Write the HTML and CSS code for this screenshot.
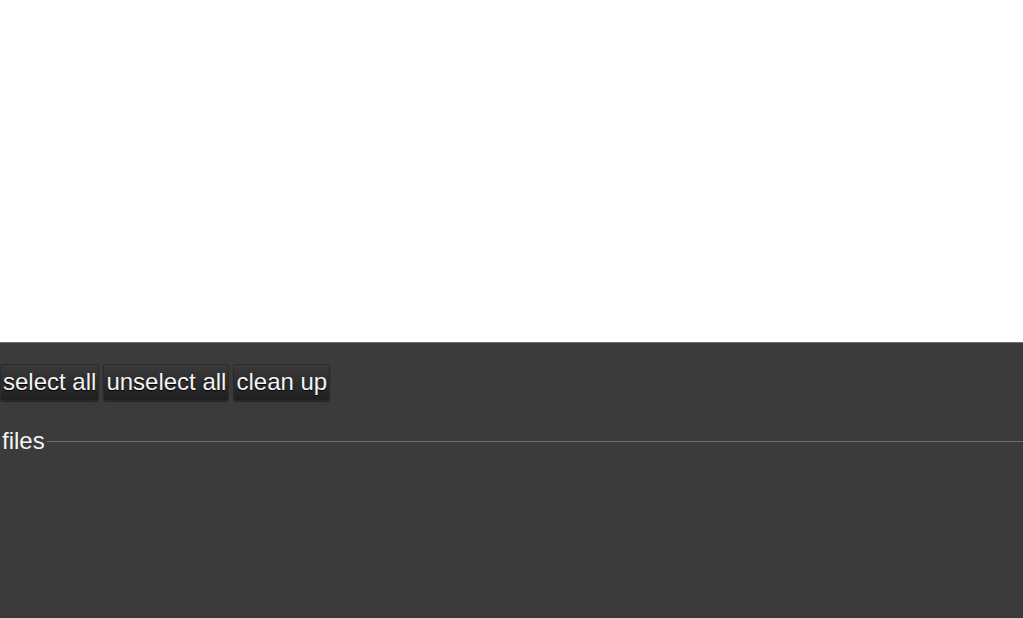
FILE: index.html
```html
<!DOCTYPE html>
<html>
<head>
<meta charset="utf-8">
<link rel="stylesheet" href="styles.css">
</head>
<body>
<div class="top"></div>
<div class="panel">
  <div class="toolbar">
    <button class="btn">select all</button>
    <button class="btn">unselect all</button>
    <button class="btn">clean up</button>
  </div>
  <fieldset class="files">
    <legend>files</legend>
  </fieldset>
</div>
</body>
</html>
```
FILE: styles.css
```css
html, body {
  margin: 0;
  padding: 0;
  height: 100%;
}
body {
  background: #fff;
  font-family: "Liberation Sans", Arial, sans-serif;
  display: flex;
  flex-direction: column;
  overflow: hidden;
}
.top {
  height: 342px;
  flex: none;
}
.panel {
  flex: 1;
  background: #3b3b3c;
  border-top: 1px solid #727272;
  padding-top: 21px;
  overflow: hidden;
}
.toolbar {
  display: flex;
  gap: 4px;
}
.btn {
  font-family: "Liberation Sans", Arial, sans-serif;
  font-size: 24px;
  color: #f4f4f4;
  background: linear-gradient(#3a3a3a, #1f1f1f);
  border: 1px solid #2a2a2a;
  border-radius: 3px;
  padding: 3px 2px 4px;
  line-height: 28px;
  text-shadow: 0 1px 1px #000;
  box-shadow: 0 1px 1px rgba(0,0,0,0.4);
  cursor: pointer;
}
.files {
  margin: 26px 0 0 0;
  padding: 0;
  border: none;
  border-top: 1px solid #6e6e6e;
}
.files legend {
  color: #f4f4f4;
  font-size: 24px;
  padding: 0 2px;
  margin-left: 0;
  line-height: 28px;
}
```
